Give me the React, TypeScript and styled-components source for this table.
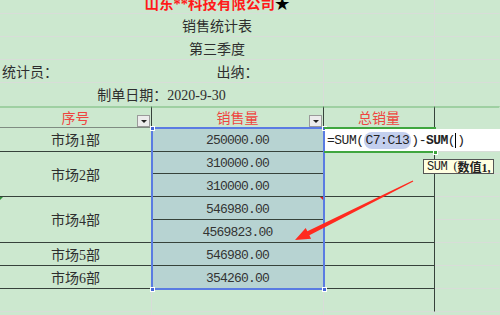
import React from 'react';
import styled, { createGlobalStyle } from 'styled-components';

const GlobalStyle = createGlobalStyle`
  html, body { margin: 0; padding: 0; background: #cce8cf; overflow: hidden; }
`;

const GRID = '#d8ddd8';
const DARK = '#36423b';
const GRAY = '#7f8c82';

type Line = 'none' | 'light' | 'dark' | 'gray';
const lineColor = (l?: Line) =>
  l === 'dark' ? DARK : l === 'gray' ? GRAY : l === 'light' ? GRID : 'transparent';

const Frame = styled.div`
  position: relative;
  width: 500px;
  height: 315px;
  overflow: hidden;
  background: #cce8cf;
  font-family: "Liberation Serif", "Noto Sans CJK SC", serif;
  color: #2e2e2e;
`;

const Sheet = styled.div`
  display: grid;
  grid-template-columns: 152px 172px 111px 65px;
  grid-template-rows: 23px 23px 23px 23px 23px 22px 24px 22px 23px 23px 23px 23px 23px 23px 23px;
  margin-top: -9px;
`;

const Cell = styled.div<{
  $c: string;
  $r: string;
  $b?: Line;
  $rt?: Line;
  $left?: boolean;
  $sel?: boolean;
  $head?: boolean;
}>`
  grid-column: ${p => p.$c};
  grid-row: ${p => p.$r};
  position: relative;
  box-sizing: border-box;
  display: flex;
  align-items: center;
  justify-content: ${p => (p.$left ? 'flex-start' : 'center')};
  padding: 3px 2px 0;
  border-bottom: 1px solid ${p => lineColor(p.$b)};
  border-right: 1px solid ${p => lineColor(p.$rt)};
  border-top: ${p => (p.$head ? '2px solid #9ed0a2' : 'none')};
  background: ${p => (p.$sel ? '#b7d3d2' : 'transparent')};
  font-size: 14px;
  line-height: 16px;
  white-space: nowrap;
`;

const Title = styled.span`
  color: #ff1a1a;
  font-weight: bold;
  font-size: 14.5px;
`;

const Star = styled.span`
  color: #000;
`;

const HeadText = styled.span`
  color: #ef4540;
`;

const Num = styled.span`
  font-family: "Liberation Mono", monospace;
  font-size: 13px;
  letter-spacing: -0.8px;
  color: #333;
`;

const Drop = styled.div`
  position: absolute;
  right: 1px;
  bottom: 0;
  width: 11px;
  height: 10px;
  background: #ececec;
  border: 1px solid #9a9a9a;
  display: flex;
  align-items: center;
  justify-content: center;
  &::after {
    content: '';
    border-left: 3px solid transparent;
    border-right: 3px solid transparent;
    border-top: 3px solid #222;
  }
`;

const Corner = styled.div<{ $color: string; $side: 'left' | 'right' }>`
  position: absolute;
  top: 0;
  ${p => p.$side}: 0;
  width: 0;
  height: 0;
  border-top: 3px solid ${p => p.$color};
  ${p => (p.$side === 'left' ? 'border-right' : 'border-left')}: 3px solid transparent;
`;

const Selection = styled.div`
  position: absolute;
  left: 151px;
  top: 127px;
  width: 174px;
  height: 163px;
  box-sizing: border-box;
  border: 2px solid #5a7be2;
  pointer-events: none;
`;

const Handle = styled.div<{ $x: number; $y: number; $color?: string }>`
  position: absolute;
  left: ${p => p.$x - 2}px;
  top: ${p => p.$y - 2}px;
  width: 5px;
  height: 5px;
  background: ${p => p.$color || '#4466d8'};
  border: 1px solid #fff;
  box-sizing: border-box;
`;

const EditBox = styled.div`
  position: absolute;
  left: 325px;
  top: 129px;
  right: 0;
  height: 22px;
  background: #fff;
  display: flex;
  align-items: center;
  padding-left: 2px;
  box-sizing: border-box;
  font-family: "Liberation Mono", monospace;
  font-size: 13px;
  letter-spacing: -0.5px;
  color: #222;
  white-space: nowrap;
`;

const EditFrame = styled.div`
  position: absolute;
  left: 324px;
  top: 127px;
  width: 112px;
  height: 26px;
  box-sizing: border-box;
  border-top: 2px solid #3fa63f;
  border-bottom: 2px solid #3fa63f;
`;

const Ref = styled.span`
  background: #c3cfee;
  border-radius: 8px;
  padding: 1px 2px;
`;

const Bold = styled.b`
  font-weight: bold;
`;

const Caret = styled.span`
  display: inline-block;
  width: 1px;
  height: 15px;
  background: #000;
  margin: 0 1px 0 0;
  vertical-align: middle;
`;

const Tip = styled.div`
  position: absolute;
  left: 423px;
  top: 159px;
  height: 15px;
  padding: 0 3px;
  box-sizing: border-box;
  border: 1px solid #555;
  background: #ffffe1;
  display: flex;
  align-items: center;
  font-size: 12px;
  white-space: nowrap;
  color: #222;
`;

const TipFn = styled.span`
  font-family: "Liberation Mono", monospace;
  letter-spacing: -0.4px;
  margin-right: 6px;
`;

const Arrow = styled.svg`
  position: absolute;
  left: 0;
  top: 0;
  pointer-events: none;
`;

export default function App() {
  return (
    <Frame>
      <GlobalStyle />
      <Sheet>
        {/* title block */}
        <Cell $c="1 / 4" $r="1" $b="light" $rt="light">
          <Title>山东**科技有限公司<Star>★</Star></Title>
        </Cell>
        <Cell $c="4" $r="1" $b="light" />
        <Cell $c="1 / 4" $r="2" $b="light" $rt="light">销售统计表</Cell>
        <Cell $c="4" $r="2" $b="light" />
        <Cell $c="1 / 4" $r="3" $b="light" $rt="light">第三季度</Cell>
        <Cell $c="4" $r="3" $b="light" />
        <Cell $c="1" $r="4" $b="light" $left>统计员：</Cell>
        <Cell $c="2" $r="4" $b="light" $rt="light">出纳：</Cell>
        <Cell $c="3" $r="4" $b="light" $rt="light" />
        <Cell $c="4" $r="4" $b="light" />
        <Cell $c="1 / 3" $r="5" $rt="light">制单日期：2020-9-30</Cell>
        <Cell $c="3" $r="5" $rt="light" />
        <Cell $c="4" $r="5" />

        {/* header */}
        <Cell $c="1" $r="6" $head $b="gray" $rt="dark">
          <HeadText>序号</HeadText>
          <Drop />
        </Cell>
        <Cell $c="2" $r="6" $head $rt="dark">
          <HeadText>销售量</HeadText>
          <Drop />
        </Cell>
        <Cell $c="3" $r="6" $head $rt="dark">
          <HeadText>总销量</HeadText>
        </Cell>
        <Cell $c="4" $r="6" $head />

        {/* column A */}
        <Cell $c="1" $r="7" $b="dark">市场1部</Cell>
        <Cell $c="1" $r="8 / 10" $b="dark">市场2部</Cell>
        <Cell $c="1" $r="10 / 12" $b="dark">
          市场4部
          <Corner $color="#2f8f3a" $side="left" />
        </Cell>
        <Cell $c="1" $r="12" $b="dark">市场5部</Cell>
        <Cell $c="1" $r="13" $b="dark">市场6部</Cell>
        <Cell $c="1" $r="14" $b="light" $rt="light" />
        <Cell $c="1" $r="15" $rt="light" />

        {/* column B */}
        <Cell $c="2" $r="7" $b="dark" $sel><Num>250000.00</Num></Cell>
        <Cell $c="2" $r="8" $b="dark" $sel><Num>310000.00</Num></Cell>
        <Cell $c="2" $r="9" $b="dark" $sel><Num>310000.00</Num></Cell>
        <Cell $c="2" $r="10" $b="dark" $sel>
          <Num>546980.00</Num>
          <Corner $color="#e02020" $side="right" />
        </Cell>
        <Cell $c="2" $r="11" $b="dark" $sel><Num>4569823.00</Num></Cell>
        <Cell $c="2" $r="12" $b="dark" $sel><Num>546980.00</Num></Cell>
        <Cell $c="2" $r="13" $sel><Num>354260.00</Num></Cell>
        <Cell $c="2" $r="14" $b="light" $rt="light" />
        <Cell $c="2" $r="15" $rt="light" />

        {/* column C */}
        <Cell $c="3" $r="7" $rt="dark" />
        <Cell $c="3" $r="8 / 10" $b="dark" $rt="dark" />
        <Cell $c="3" $r="10 / 12" $b="dark" $rt="dark" />
        <Cell $c="3" $r="12" $b="dark" $rt="dark" />
        <Cell $c="3" $r="13" $b="dark" $rt="dark" />
        <Cell $c="3" $r="14" $b="light" $rt="dark" />
        <Cell $c="3" $r="15" $rt="light" />

        {/* column D */}
        <Cell $c="4" $r="7" $b="light" />
        <Cell $c="4" $r="8" $b="light" />
        <Cell $c="4" $r="9" $b="light" />
        <Cell $c="4" $r="10" $b="light" />
        <Cell $c="4" $r="11" $b="light" />
        <Cell $c="4" $r="12" $b="light" />
        <Cell $c="4" $r="13" $b="light" />
        <Cell $c="4" $r="14" $b="light" />
        <Cell $c="4" $r="15" />
      </Sheet>

      <Selection />
      <Handle $x={152} $y={128} />
      <Handle $x={324} $y={128} />
      <Handle $x={152} $y={289} />
      <Handle $x={324} $y={289} />

      <EditBox>
        =SUM(<Ref>C7:C13</Ref>)-<Bold>SUM</Bold>(<Caret />)
      </EditBox>
      <EditFrame />
      <Handle $x={435} $y={152} $color="#3fa63f" />

      <Tip>
        <TipFn>SUM</TipFn>(<Bold>数值1,</Bold>
      </Tip>

      <Arrow width="500" height="315" viewBox="0 0 500 315">
        <polygon
          points="412.7,180.4 307.4,231.3 305.7,227.9 295,240 311.1,238.7 309.4,235.3 413.3,181.6"
          fill="#ff2a1f"
        />
      </Arrow>
    </Frame>
  );
}
